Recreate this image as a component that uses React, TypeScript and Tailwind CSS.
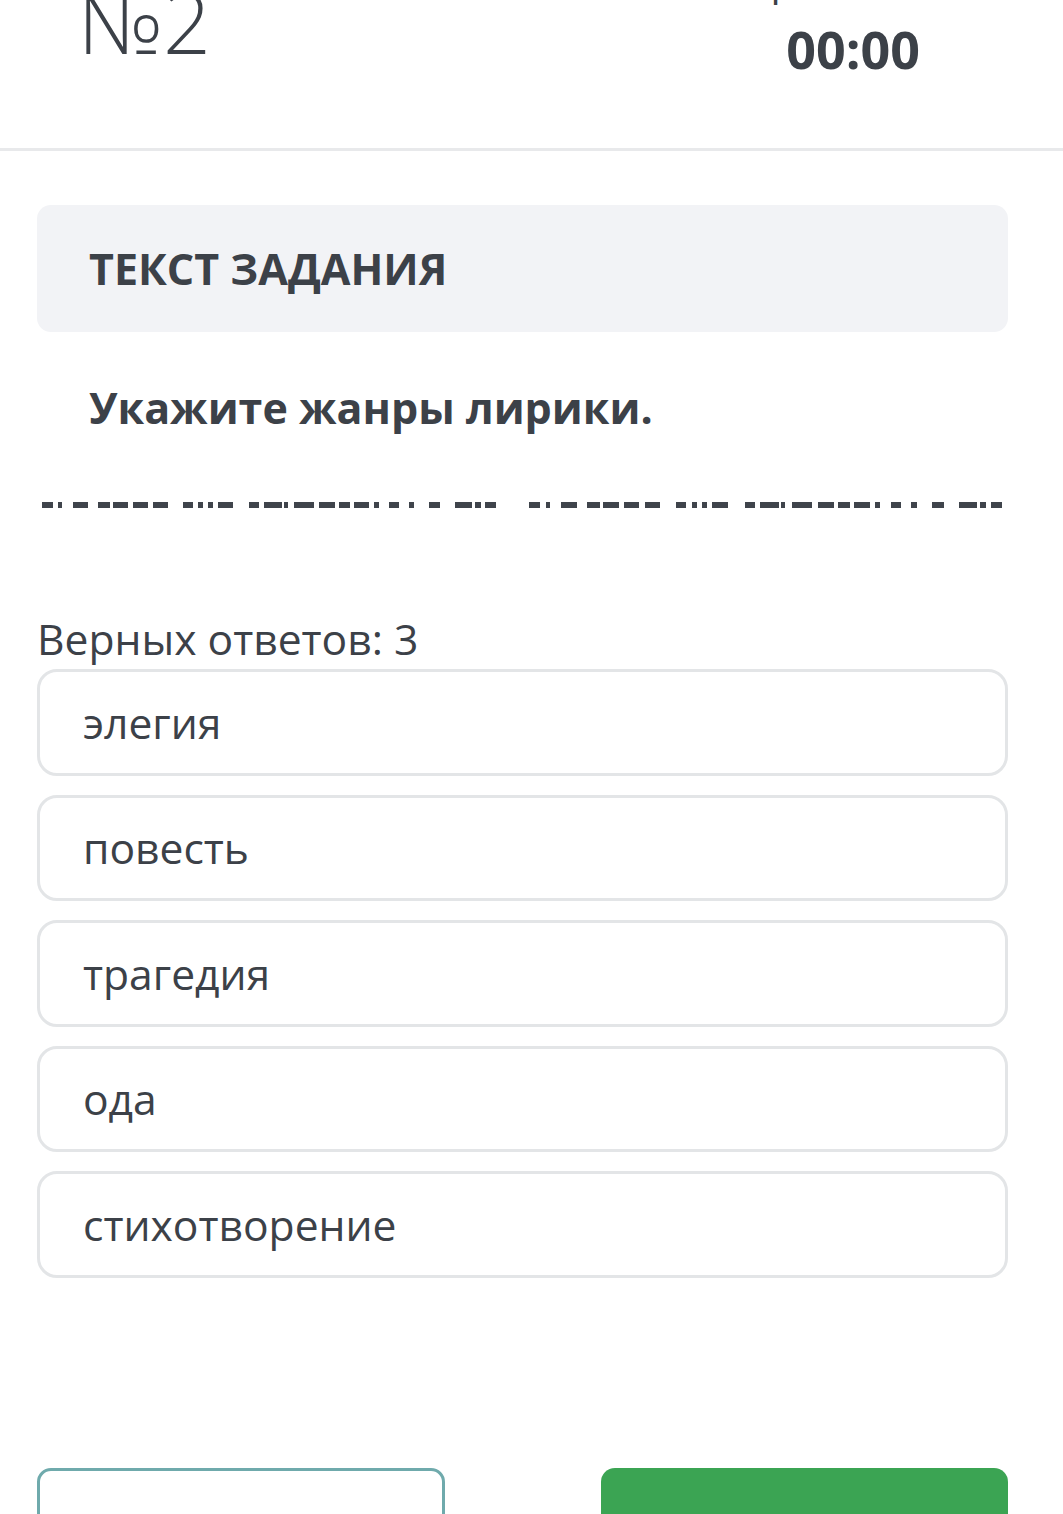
import React from 'react';

const OPTIONS = ['элегия', 'повесть', 'трагедия', 'ода', 'стихотворение'];

// Redacted line under the question: [start, end] x positions of the dark bars
const BARS_A: [number, number][] = [
  [42, 53], [58, 62], [73, 88], [98, 110], [113, 128], [133, 148], [153, 168],
  [183, 193], [198, 203], [208, 213], [218, 233],
  [249, 259], [264, 282], [284, 288], [294, 314], [319, 335], [339, 350], [354, 369],
  [374, 379], [389, 399], [409, 414], [429, 440], [455, 472], [475, 481], [485, 496],
];
const BARS_B: [number, number][] = BARS_A.map(([s, e]) => [
  Math.round(529 + (s - 42) * 1.042),
  Math.round(529 + (e - 42) * 1.042),
]);
const BARS = [...BARS_A, ...BARS_B];

function RedactedLine() {
  let prev = 0;
  return (
    <div className="flex h-[6px]">
      {BARS.map(([s, e], i) => {
        const ml = s - prev;
        prev = e;
        return <span key={i} className="block h-full shrink-0 bg-[#3f444b]" style={{ marginLeft: ml, width: e - s }} />;
      })}
    </div>
  );
}

export default function App() {
  return (
    <div className="min-h-screen w-full overflow-hidden bg-white font-['Open_Sans',sans-serif] text-[#3c4148]">
      {/* Header — scrolled, top is cut off */}
      <div className="flex h-[151px] justify-between border-b-[3px] border-[#e8e9eb] pl-[78px] pr-[143px]">
        <div className="-mt-[20px] text-[84px] font-light leading-none">№2</div>
        <div className="flex flex-col items-end">
          <div className="-mt-[40px] text-[40px] leading-none">Осталось времени</div>
          <div className="mt-[23px] text-[52px] font-bold leading-none">00:00</div>
        </div>
      </div>

      <div className="pl-[37px] pr-[55px] pt-[54px]">
        <div className="flex h-[127px] items-center rounded-[14px] bg-[#f2f3f6] pl-[52px]">
          <span className="text-[43px] font-bold leading-[60px]">ТЕКСТ ЗАДАНИЯ</span>
        </div>

        <p className="mt-[46px] pl-[52px] text-[43px] font-bold leading-[60px]">Укажите жанры лирики.</p>
      </div>

      <div className="mt-[64px]">
        <RedactedLine />
      </div>

      <div className="pl-[37px] pr-[55px]">
        <p className="mt-[102px] text-[42.6px] leading-[57px]">Верных ответов: 3</p>

        <div className="mt-[2px] flex flex-col gap-[19px]">
          {OPTIONS.map((o) => (
            <div
              key={o}
              className="flex h-[106.5px] items-center rounded-[20px] border-[3px] border-[#e3e5e7] bg-white pl-[43px] text-[42.6px] leading-[57px]"
            >
              {o}
            </div>
          ))}
        </div>

        <div className="mt-[190px] flex justify-between">
          <button className="flex h-[120px] w-[408px] items-center justify-center rounded-[14px] border-[3px] border-[#6faaac] bg-white text-[42px] text-[#6faaac]">
            Назад
          </button>
          <button className="flex h-[120px] w-[407px] items-center justify-center rounded-[14px] bg-[#3ba453] text-[42px] text-white">
            Далее
          </button>
        </div>
      </div>
    </div>
  );
}
